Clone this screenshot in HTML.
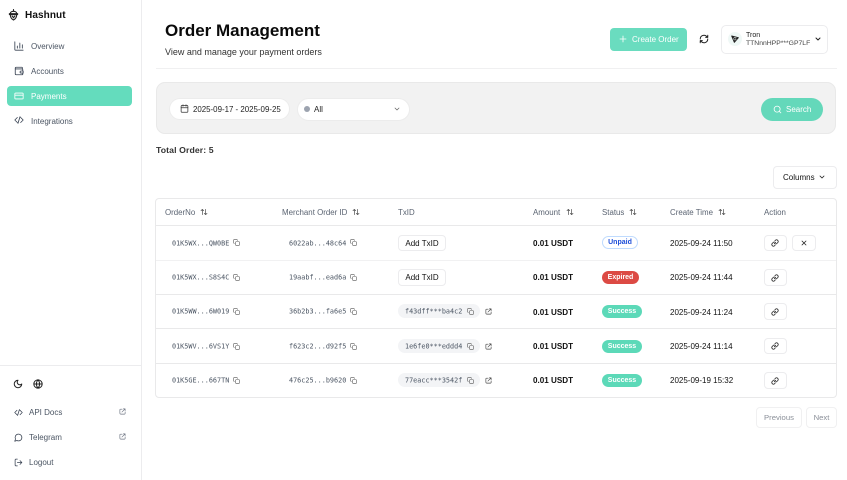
<!DOCTYPE html>
<html><head><meta charset="utf-8"><style>
*{box-sizing:border-box}
html,body{margin:0;padding:0;width:847px;height:480px;overflow:hidden;background:#fff;font-family:"Liberation Sans",sans-serif;color:#111}
.a{position:absolute;white-space:nowrap;line-height:1}
.n{font-size:8px;color:#4b5563;transform:translateY(-50%);margin-top:1px}
.m{font-family:"DejaVu Sans Mono","Liberation Mono",monospace;font-size:6.800px;color:#4b5563;transform:translateY(-50%);margin-top:.5px}
.h{font-size:7.900px;color:#5b6472;transform:translateY(-50%);margin-top:.5px}
.t{font-size:8px;color:#111;transform:translateY(-50%);margin-top:1px}
.b{font-size:8.100px;font-weight:bold;color:#111;transform:translateY(-50%);margin-top:1px}
.line{position:absolute;background:#e9e9ea;height:1px}
.btn{position:absolute;border:1px solid #ececee;border-radius:4px;background:#fff;display:flex;align-items:center;justify-content:center;font-size:8px;color:#111}
.pill{position:absolute;height:13px;border-radius:7px;display:flex;align-items:center;justify-content:center;font-size:7px;font-weight:bold;color:#fff;left:602px;width:40px}
.tx{position:absolute;left:398px;width:82px;height:14px;border-radius:7px;background:#f3f4f6}
svg{position:absolute;fill:none;stroke:currentColor;stroke-linecap:round;stroke-linejoin:round;overflow:visible}
.s{color:#374151}
</style></head><body>
<svg width="0" height="0" style="position:absolute"><defs>
<symbol id="copy" viewBox="0 0 24 24"><rect x="9" y="9" width="13" height="13" rx="2" fill="none" stroke="currentColor" stroke-width="2"/><path d="M5 15H4a2 2 0 0 1-2-2V4a2 2 0 0 1 2-2h9a2 2 0 0 1 2 2v1" fill="none" stroke="currentColor" stroke-width="2"/></symbol>
<symbol id="sort" viewBox="0 0 24 24"><path d="M7 20V4M3 8l4-4 4 4M17 4v16M13 16l4 4 4-4" fill="none" stroke="currentColor" stroke-width="2" stroke-linecap="round" stroke-linejoin="round"/></symbol>
<symbol id="link" viewBox="0 0 24 24"><path d="M10 13a5 5 0 0 0 7.500.5l3-3a5 5 0 0 0-7-7l-1.700 1.700M14 11a5 5 0 0 0-7.500-.5l-3 3a5 5 0 0 0 7 7l1.700-1.700" fill="none" stroke="currentColor" stroke-width="2.400" stroke-linecap="round" stroke-linejoin="round"/></symbol>
<symbol id="ext" viewBox="0 0 24 24"><path d="M21 13v6a2 2 0 0 1-2 2H6a3 3 0 0 1-3-3V6a2 2 0 0 1 2-2h6M15 3h6v6M10 14L21 3" fill="none" stroke="currentColor" stroke-width="2.200" stroke-linecap="round" stroke-linejoin="round"/></symbol>
</defs></svg>

<!-- sidebar -->
<div style="position:absolute;left:141px;top:0;width:1px;height:480px;background:#ececee"></div>
<svg style="left:8px;top:9px;color:#222" width="11" height="12" viewBox="0 0 24 26" stroke-width="2.400"><path d="M12 1v4M5 10c0-3 3-5 7-5s7 2 7 5M3 10h18v2H3zM5 12c0 6 3 10 7 12 4-2 7-6 7-12M9 15l3 4 3-4"/></svg>
<div class="a" style="left:25px;top:15.500px;transform:translateY(-50%);font-size:10px;font-weight:bold;letter-spacing:.1px;color:#111">Hashnut</div>

<svg class="s" style="left:14px;top:41px" width="10" height="10" viewBox="0 0 24 24" stroke-width="2"><path d="M2 2v18a2 2 0 0 0 2 2h18M8 17v-5M14 17V5M20 17V9"/></svg>
<div class="a n" style="left:31px;top:46px">Overview</div>
<svg class="s" style="left:14px;top:66px" width="10" height="10" viewBox="0 0 24 24" stroke-width="2"><path d="M20 7V4a1 1 0 0 0-1-1H5a2 2 0 0 0 0 4h15a1 1 0 0 1 1 1v4M21 17v3a1 1 0 0 1-1 1H5a2 2 0 0 1-2-2V5"/><path d="M17 12a2 2 0 0 0 0 5h5v-5z"/></svg>
<div class="a n" style="left:31px;top:71px">Accounts</div>
<div style="position:absolute;left:7px;top:86px;width:125px;height:20px;border-radius:4px;background:#64dcbd"></div>
<svg style="left:14px;top:91px;color:#fff" width="10" height="10" viewBox="0 0 24 24" stroke-width="2"><rect x="2" y="5" width="20" height="14" rx="2"/><path d="M2 10h20"/></svg>
<div class="a n" style="left:31px;top:95.500px;color:#fff">Payments</div>
<svg class="s" style="left:14px;top:115px" width="10" height="10" viewBox="0 0 24 24" stroke-width="2"><path d="M16 18l6-6-6-6M8 6l-6 6 6 6M14.500 4l-5 16"/></svg>
<div class="a n" style="left:31px;top:120.500px">Integrations</div>

<div class="line" style="left:0;top:365px;width:141px;background:#ececee"></div>
<svg style="left:13px;top:379px;color:#222" width="10" height="10" viewBox="0 0 24 24" stroke-width="2.400"><path d="M12 3a6 6 0 0 0 9 9 9 9 0 1 1-9-9z"/></svg>
<svg style="left:33px;top:379px;color:#222" width="10" height="10" viewBox="0 0 24 24" stroke-width="2.400"><circle cx="12" cy="12" r="10"/><path d="M2 12h20M12 2a15 15 0 0 1 0 20 15 15 0 0 1 0-20"/></svg>
<svg class="s" style="left:14px;top:408px" width="9" height="9" viewBox="0 0 24 24" stroke-width="2"><path d="M16 18l6-6-6-6M8 6l-6 6 6 6M14.500 4l-5 16"/></svg>
<div class="a n" style="left:29px;top:412px">API Docs</div>
<svg class="s" style="left:119px;top:408px;color:#6b7280" width="7" height="7" viewBox="0 0 24 24"><use href="#ext"/></svg>
<svg class="s" style="left:14px;top:433px" width="9" height="9" viewBox="0 0 24 24" stroke-width="2"><path d="M7.900 20A9 9 0 1 0 4 16.100L2 22z"/></svg>
<div class="a n" style="left:29px;top:437px">Telegram</div>
<svg class="s" style="left:119px;top:433px;color:#6b7280" width="7" height="7" viewBox="0 0 24 24"><use href="#ext"/></svg>
<svg class="s" style="left:14px;top:458px" width="9" height="9" viewBox="0 0 24 24" stroke-width="2"><path d="M9 21H5a2 2 0 0 1-2-2V5a2 2 0 0 1 2-2h4M16 17l5-5-5-5M21 12H9"/></svg>
<div class="a n" style="left:29px;top:462px">Logout</div>

<!-- header -->
<div class="a" style="left:165px;top:22px;font-size:17px;font-weight:bold;color:#0a0a0a">Order Management</div>
<div class="a" style="left:165px;top:47.500px;font-size:9px;color:#333">View and manage your payment orders</div>
<div style="position:absolute;left:610px;top:28px;width:77px;height:23px;border-radius:4px;background:#6adcbf"></div>
<svg style="left:619px;top:35px;color:#fff" width="8" height="8" viewBox="0 0 24 24" stroke-width="2.400"><path d="M12 3v18M3 12h18"/></svg>
<div class="a" style="left:632px;top:35.500px;font-size:8px;color:#fff">Create Order</div>
<svg style="left:699px;top:34px;color:#222" width="10" height="10" viewBox="0 0 24 24" stroke-width="2.400"><path d="M3 12a9 9 0 0 1 15-6.700L21 8M21 3v5h-5M21 12a9 9 0 0 1-15 6.700L3 16M3 21v-5h5"/></svg>
<div style="position:absolute;left:721px;top:25px;width:107px;height:29px;border:1px solid #ececee;border-radius:5px"></div>
<div style="position:absolute;left:728px;top:32px;width:14px;height:14px;border-radius:50%;background:#eff8f6"></div>
<svg style="left:731px;top:35px;color:#222" width="8" height="8" viewBox="0 0 24 24" stroke-width="2.800"><path d="M2 3l20 5-12 14zM2 3l10 9 10-4M12 12l-2 10"/></svg>
<div class="a" style="left:746px;top:32px;font-size:7px;color:#222">Tron</div>
<div class="a" style="left:746px;top:41px;font-size:6.800px;color:#444">TTNnnHPP***GP7LF</div>
<svg style="left:814px;top:35px;color:#222" width="8" height="8" viewBox="0 0 24 24" stroke-width="3"><path d="M6 9l6 6 6-6"/></svg>
<div class="line" style="left:156px;top:68px;width:681px;background:#f0f0f1"></div>

<!-- filter -->
<div style="position:absolute;left:156px;top:82px;width:680px;height:52px;border-radius:9px;background:#f2f2f2;border:1px solid #e9e9e9"></div>
<div style="position:absolute;left:169px;top:98px;width:121px;height:22px;border-radius:11px;background:#fff;border:1px solid #ececec"></div>
<svg style="left:180px;top:104px;color:#333" width="9" height="9" viewBox="0 0 24 24" stroke-width="2"><rect x="3" y="4" width="18" height="18" rx="2"/><path d="M16 2v4M8 2v4M3 10h18"/></svg>
<div class="a" style="left:193px;top:106px;font-size:7.900px;color:#222">2025-09-17 - 2025-09-25</div>
<div style="position:absolute;left:297px;top:98px;width:113px;height:23px;border-radius:12px;background:#fff;border:1px solid #ececec"></div>
<div style="position:absolute;left:304px;top:106px;width:6px;height:6px;border-radius:50%;background:#9ca3af"></div>
<div class="a" style="left:314px;top:106px;font-size:8px;color:#222">All</div>
<svg style="left:393px;top:105px;color:#666" width="8" height="8" viewBox="0 0 24 24" stroke-width="2.200"><path d="M6 9l6 6 6-6"/></svg>
<div style="position:absolute;left:761px;top:98px;width:62px;height:23px;border-radius:12px;background:#64d8ba"></div>
<svg style="left:773px;top:105px;color:#fff" width="9" height="9" viewBox="0 0 24 24" stroke-width="2.200"><circle cx="11" cy="11" r="8"/><path d="M21 21l-4.300-4.300"/></svg>
<div class="a" style="left:786px;top:106px;font-size:8px;color:#fff">Search</div>

<div class="a" style="left:156px;top:146px;font-size:8.700px;font-weight:bold;color:#333;letter-spacing:.1px">Total Order: 5</div>
<div class="btn" style="left:773px;top:166px;width:64px;height:23px;border-radius:4px;justify-content:flex-start;padding-left:9px">Columns</div>
<svg style="left:818px;top:173px;color:#222" width="8" height="8" viewBox="0 0 24 24" stroke-width="2.600"><path d="M6 9l6 6 6-6"/></svg>

<!-- table -->
<div style="position:absolute;left:155px;top:198px;width:682px;height:200px;border:1px solid #e9e9ea;border-radius:4px"></div>
<div class="line" style="left:156px;top:225px;width:680px"></div>
<div class="line" style="left:156px;top:260px;width:680px;background:#f1f1f2"></div>
<div class="line" style="left:156px;top:294px;width:680px"></div>
<div class="line" style="left:156px;top:328px;width:680px"></div>
<div class="line" style="left:156px;top:363px;width:680px"></div>

<div class="a h" style="left:165px;top:212px">OrderNo</div>
<svg style="left:200px;top:208px;color:#444" width="8" height="8"><use href="#sort"/></svg>
<div class="a h" style="left:282px;top:212px">Merchant Order ID</div>
<svg style="left:352px;top:208px;color:#444" width="8" height="8"><use href="#sort"/></svg>
<div class="a h" style="left:398px;top:212px">TxID</div>
<div class="a h" style="left:533px;top:212px">Amount</div>
<svg style="left:566px;top:208px;color:#444" width="8" height="8"><use href="#sort"/></svg>
<div class="a h" style="left:602px;top:212px">Status</div>
<svg style="left:629px;top:208px;color:#444" width="8" height="8"><use href="#sort"/></svg>
<div class="a h" style="left:670px;top:212px">Create Time</div>
<svg style="left:718px;top:208px;color:#444" width="8" height="8"><use href="#sort"/></svg>
<div class="a h" style="left:764px;top:212px">Action</div>

<!-- row 1 -->
<div class="a m" style="left:172px;top:243px">01K5WX...QW0BE</div>
<svg style="left:233px;top:239px;color:#555" width="7" height="7"><use href="#copy"/></svg>
<div class="a m" style="left:289px;top:243px">6022ab...48c64</div>
<svg style="left:350px;top:239px;color:#555" width="7" height="7"><use href="#copy"/></svg>
<div class="btn" style="left:398px;top:235px;width:48px;height:16px">Add TxID</div>
<div class="a b" style="left:533px;top:243px">0.01 USDT</div>
<div class="pill" style="top:236px;width:36px;background:#fff;border:1px solid #bfdbfe;color:#1d4ed8">Unpaid</div>
<div class="a t" style="left:670px;top:243px">2025-09-24 11:50</div>
<div class="btn" style="left:764px;top:235px;width:23px;height:16px"></div>
<svg style="left:771px;top:239px;color:#222" width="8" height="8"><use href="#link"/></svg>
<div class="btn" style="left:792px;top:235px;width:24px;height:16px"></div>
<svg style="left:800px;top:239px;color:#222" width="8" height="8" viewBox="0 0 24 24" stroke-width="2.400"><path d="M18 6L6 18M6 6l12 12"/></svg>

<!-- row 2 -->
<div class="a m" style="left:172px;top:277px">01K5WX...S8S4C</div>
<svg style="left:233px;top:273.500px;color:#555" width="7" height="7"><use href="#copy"/></svg>
<div class="a m" style="left:289px;top:277px">19aabf...ead6a</div>
<svg style="left:350px;top:273.500px;color:#555" width="7" height="7"><use href="#copy"/></svg>
<div class="btn" style="left:398px;top:269px;width:48px;height:17px">Add TxID</div>
<div class="a b" style="left:533px;top:277px">0.01 USDT</div>
<div class="pill" style="top:271px;width:37px;background:#dc4a44">Expired</div>
<div class="a t" style="left:670px;top:277px">2025-09-24 11:44</div>
<div class="btn" style="left:764px;top:269px;width:23px;height:17px"></div>
<svg style="left:771px;top:273.500px;color:#222" width="8" height="8"><use href="#link"/></svg>

<!-- row 3 -->
<div class="a m" style="left:172px;top:311.500px">01K5WW...6W019</div>
<svg style="left:233px;top:308px;color:#555" width="7" height="7"><use href="#copy"/></svg>
<div class="a m" style="left:289px;top:311.500px">36b2b3...fa6e5</div>
<svg style="left:350px;top:308px;color:#555" width="7" height="7"><use href="#copy"/></svg>
<div class="tx" style="top:304px"></div>
<div class="a m" style="left:405px;top:311.500px">f43dff***ba4c2</div>
<svg style="left:467px;top:308px;color:#555" width="7" height="7"><use href="#copy"/></svg>
<svg style="left:485px;top:308px;color:#444" width="7" height="7"><use href="#ext"/></svg>
<div class="a b" style="left:533px;top:311.500px">0.01 USDT</div>
<div class="pill" style="top:305px;background:#5cd9b8">Success</div>
<div class="a t" style="left:670px;top:311.500px">2025-09-24 11:24</div>
<div class="btn" style="left:764px;top:303px;width:23px;height:17px"></div>
<svg style="left:771px;top:307.500px;color:#222" width="8" height="8"><use href="#link"/></svg>

<!-- row 4 -->
<div class="a m" style="left:172px;top:346px">01K5WV...6VS1Y</div>
<svg style="left:233px;top:342.500px;color:#555" width="7" height="7"><use href="#copy"/></svg>
<div class="a m" style="left:289px;top:346px">f623c2...d92f5</div>
<svg style="left:350px;top:342.500px;color:#555" width="7" height="7"><use href="#copy"/></svg>
<div class="tx" style="top:339px"></div>
<div class="a m" style="left:405px;top:346px">1e6fe0***eddd4</div>
<svg style="left:467px;top:342.500px;color:#555" width="7" height="7"><use href="#copy"/></svg>
<svg style="left:485px;top:342.500px;color:#444" width="7" height="7"><use href="#ext"/></svg>
<div class="a b" style="left:533px;top:346px">0.01 USDT</div>
<div class="pill" style="top:340px;background:#5cd9b8">Success</div>
<div class="a t" style="left:670px;top:346px">2025-09-24 11:14</div>
<div class="btn" style="left:764px;top:338px;width:23px;height:16px"></div>
<svg style="left:771px;top:342px;color:#222" width="8" height="8"><use href="#link"/></svg>

<!-- row 5 -->
<div class="a m" style="left:172px;top:380px">01K5GE...667TN</div>
<svg style="left:233px;top:376.500px;color:#555" width="7" height="7"><use href="#copy"/></svg>
<div class="a m" style="left:289px;top:380px">476c25...b9620</div>
<svg style="left:350px;top:376.500px;color:#555" width="7" height="7"><use href="#copy"/></svg>
<div class="tx" style="top:373px"></div>
<div class="a m" style="left:405px;top:380px">77eacc***3542f</div>
<svg style="left:467px;top:376.500px;color:#555" width="7" height="7"><use href="#copy"/></svg>
<svg style="left:485px;top:376.500px;color:#444" width="7" height="7"><use href="#ext"/></svg>
<div class="a b" style="left:533px;top:380px">0.01 USDT</div>
<div class="pill" style="top:374px;background:#5cd9b8">Success</div>
<div class="a t" style="left:670px;top:380px">2025-09-19 15:32</div>
<div class="btn" style="left:764px;top:372px;width:23px;height:17px"></div>
<svg style="left:771px;top:376.500px;color:#222" width="8" height="8"><use href="#link"/></svg>

<div class="btn" style="left:756px;top:407px;width:46px;height:21px;color:#8a8f98;border-color:#f0f0f1;font-size:7.700px">Previous</div>
<div class="btn" style="left:806px;top:407px;width:31px;height:21px;color:#8a8f98;border-color:#f0f0f1;font-size:7.700px">Next</div>
</body></html>
